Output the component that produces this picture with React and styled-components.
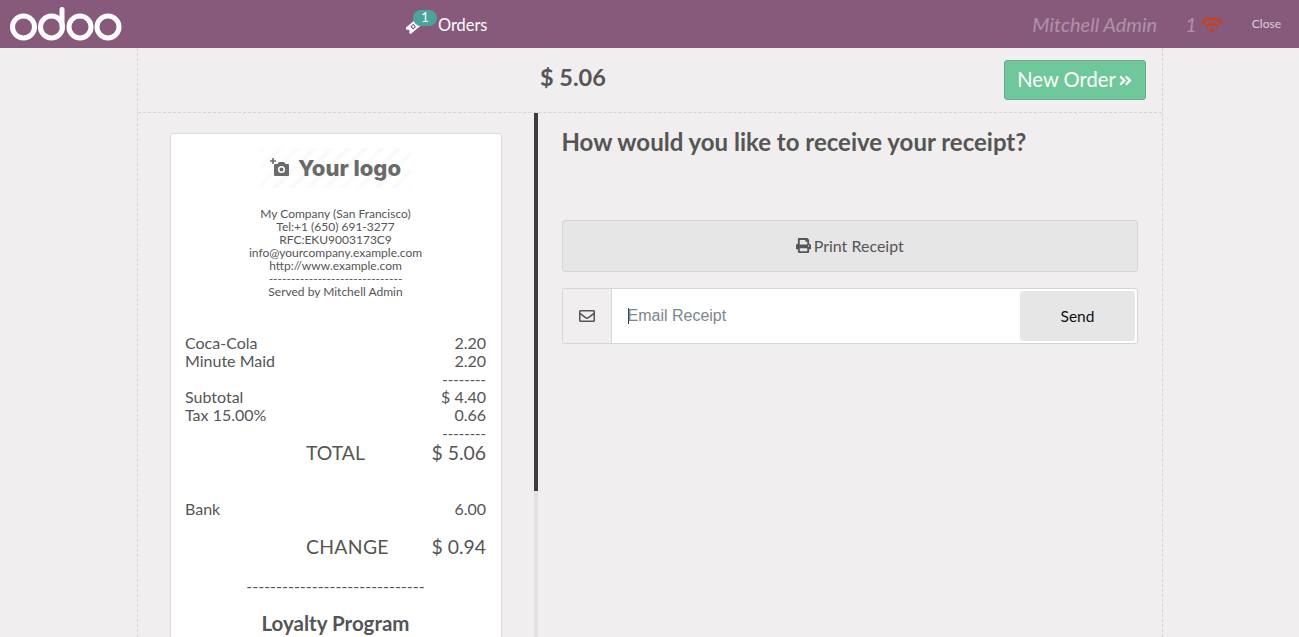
import React from "react";
import styled, { createGlobalStyle } from "styled-components";
import { FaPrint, FaAngleDoubleRight, FaRegEnvelope, FaWifi } from "react-icons/fa";

const Global = createGlobalStyle`
  html, body { margin: 0; height: 100%; overflow: hidden; }
  body { font-family: "Lato", "Liberation Sans", sans-serif; background: #f0eeee; color: #555; }
  * { box-sizing: border-box; }
`;

const Page = styled.div`
  height: 637px;
  display: flex;
  flex-direction: column;
  overflow: hidden;
`;
const TopBar = styled.header`
  flex: none;
  height: 48px;
  background: #875a7b;
  display: flex;
  align-items: center;
  padding-left: 10px;
`;
const LogoSvg = styled.svg`
  width: 112px;
  height: 40px;
  flex: none;
  margin-top: -4px;
`;
const OrdersTab = styled.div`
  position: relative;
  margin-left: 284px;
  width: 92px;
  height: 48px;
  display: flex;
  align-items: center;
  color: #fff;
  font-size: 16.4px;
`;
const Ticket = styled.svg`
  width: 16px;
  height: 16px;
  flex: none;
  margin-right: 16px;
  margin-top: 4px;
`;
const Badge = styled.span`
  position: absolute;
  left: 7px;
  top: 10px;
  width: 24px;
  height: 16px;
  border-radius: 9px;
  background: #4aa39c;
  color: #fff;
  font-size: 13px;
  line-height: 15px;
  text-align: center;
`;
const Status = styled.div`
  margin-left: auto;
  display: flex;
  align-items: center;
  font-style: italic;
  font-size: 20px;
  color: rgba(255, 255, 255, 0.35);
`;
const Cashier = styled.span`
  margin-right: 28px;
`;
const WifiIcon = styled(FaWifi)`
  width: 22px;
  height: 18px;
  margin: 1px 0 0 4px;
  color: #c7401f;
`;
const CloseBtn = styled.span`
  margin: -1px 18px 0 29px;
  font-size: 12px;
  color: rgba(255, 255, 255, 0.72);
`;
const Screen = styled.main`
  flex: 1;
  min-height: 0;
  width: 1026px;
  margin-left: 137px;
  border-left: 1px dashed #d6d4d4;
  border-right: 1px dashed #d6d4d4;
  display: flex;
  flex-direction: column;
`;
const TopRow = styled.div`
  flex: none;
  height: 65px;
  border-bottom: 1px dashed #d6d4d4;
  position: relative;
  display: flex;
  align-items: center;
  justify-content: flex-end;
  padding-right: 16px;
`;
const Due = styled.div`
  position: absolute;
  left: 402px;
  top: 14px;
  font-size: 23.5px;
  line-height: 30px;
  font-weight: 700;
  color: #555;
`;
const NewOrder = styled.button`
  height: 40px;
  width: 142px;
  background: #6ec89b;
  border: 1px solid #64ad88;
  border-radius: 3px;
  color: #fff;
  font: 400 20.2px "Lato", sans-serif;
  padding: 0 0 2px;
  display: flex;
  align-items: center;
  justify-content: center;
  gap: 2px;
`;
const NextIcon = styled(FaAngleDoubleRight)`
  width: 15px;
  height: 15px;
  margin-top: 3px;
`;
const Columns = styled.div`
  flex: 1;
  min-height: 0;
  display: flex;
`;
const LeftPane = styled.section`
  flex: none;
  width: 396px;
  padding: 20px 0 0 32px;
  overflow: hidden;
`;
const Track = styled.div`
  flex: none;
  width: 4px;
  background: #e2e2e2;
`;
const Thumb = styled.div`
  height: 378px;
  background: #3c3c3c;
`;
const Receipt = styled.article`
  width: 332px;
  background: #fff;
  border: 1px solid #dcdcdc;
  border-radius: 3px;
  padding: 14px 15px 0 14px;
  height: 600px;
  color: #555;
`;
const LogoBox = styled.div`
  width: 150px;
  height: 40px;
  margin: 0 auto 0;
  display: flex;
  align-items: center;
  justify-content: center;
  gap: 8px;
  font-family: "Inter", sans-serif;
  font-size: 22px;
  font-weight: 800;
  color: #6a6a6a;
  background: repeating-linear-gradient(135deg, #fafafa 0 4px, #fff 4px 12px);
`;
const CameraIcon = styled.svg`
  width: 20px;
  height: 20px;
  flex: none;
`;
const Contact = styled.div`
  margin-top: 19px;
  text-align: center;
  font-size: 12px;
  line-height: 13px;
`;
const Lines = styled.div`
  margin-top: 36px;
  font-size: 16px;
  line-height: 18px;
`;
const Row = styled.div`
  display: flex;
  justify-content: space-between;
  margin-top: ${p => p.$gap || 0}px;
`;
const Dash = styled.div`
  text-align: right;
  font-size: 14.7px;
`;
const BigRow = styled.div`
  display: flex;
  justify-content: space-between;
  margin-top: ${p => p.$gap || 0}px;
  padding-left: 121px;
  font-size: 19.4px;
  line-height: 22px;
`;
const ChangeLabel = styled.span`
  letter-spacing: 0.3px;
`;
const Rule = styled.div`
  margin-top: 19px;
  text-align: center;
  font-size: 16px;
  line-height: 18px;
`;
const Loyalty = styled.h3`
  margin: 16px 0 0;
  text-align: center;
  font-size: 20.5px;
  line-height: 24px;
  font-weight: 700;
  color: #555;
`;
const RightPane = styled.section`
  flex: 1;
  padding: 14px 24px 0 23.5px;
`;
const Title = styled.h2`
  margin: 0;
  font-size: 24px;
  line-height: 30px;
  font-weight: 700;
  color: #555;
`;
const PrintBtn = styled.button`
  display: flex;
  width: 100%;
  height: 52px;
  margin-top: 63px;
  padding: 0 0 2px;
  background: #e6e6e6;
  border: 1px solid #d6d6d6;
  border-radius: 3px;
  color: #555;
  font: 400 16px "Lato", sans-serif;
  align-items: center;
  justify-content: center;
  gap: 3px;
`;
const EmailGroup = styled.div`
  display: flex;
  height: 56px;
  margin-top: 16px;
  border: 1px solid #d6d6d6;
  border-radius: 3px;
  background: #fff;
  overflow: hidden;
`;
const EmailIcon = styled.div`
  flex: none;
  width: 49px;
  background: #f0eeee;
  border-right: 1px solid #d6d6d6;
  display: flex;
  align-items: center;
  justify-content: center;
  color: #555;
  font-size: 16px;
`;
const EmailText = styled.div`
  flex: 1;
  padding: 0 16px;
  display: flex;
  align-items: center;
  font-family: "Liberation Sans", Arial, sans-serif;
  font-size: 16px;
  color: #7d868c;
`;
const Caret = styled.span`
  width: 1px;
  height: 16px;
  margin-right: -1px;
  background: #333;
`;
const SendBtn = styled.button`
  flex: none;
  width: 115px;
  margin: 2px;
  background: #e6e6e6;
  border: none;
  border-radius: 3px;
  color: #111;
  font: 400 15.5px "Lato", sans-serif;
  padding: 0;
`;

export default function App() {
  return (
    <Page>
      <Global />
      <TopBar>
        <LogoSvg viewBox="0 0 112 40" aria-label="odoo">
          <g fill="none" stroke="#fff" strokeWidth="5">
            <circle cx="13.5" cy="25" r="11" />
            <circle cx="41.5" cy="25" r="11" />
            <circle cx="70" cy="25" r="11" />
            <circle cx="98" cy="25" r="11" />
            <path d="M52 25V7.5" strokeLinecap="round" />
          </g>
        </LogoSvg>
        <OrdersTab>
          <Ticket viewBox="0 0 16 16">
            <g transform="rotate(-40 8 8)">
              <path fill="#fff" d="M0 4h16v2.4a1.6 1.6 0 0 0 0 3.2V12H0V9.6a1.6 1.6 0 0 0 0-3.2Z" />
              <rect x="5" y="6" width="4" height="4" fill="#875a7b" />
              <rect x="6" y="7" width="2" height="2" fill="#fff" />
            </g>
          </Ticket>
          <Badge>1</Badge>
          Orders
        </OrdersTab>
        <Status>
          <Cashier>Mitchell Admin</Cashier>
          1
          <WifiIcon />
        </Status>
        <CloseBtn>Close</CloseBtn>
      </TopBar>
      <Screen>
        <TopRow>
          <Due>$ 5.06</Due>
          <NewOrder>New Order<NextIcon /></NewOrder>
        </TopRow>
        <Columns>
          <LeftPane>
            <Receipt>
              <LogoBox>
                <CameraIcon viewBox="0 0 20 20">
                  <path fill="#6a6a6a" d="M5 6h2.5L9 4h5l1.5 2H18a1 1 0 0 1 1 1v10a1 1 0 0 1-1 1H5a1 1 0 0 1-1-1V7a1 1 0 0 1 1-1Z" />
                  <circle cx="11.5" cy="11.5" r="3.6" fill="#fff" />
                  <circle cx="11.5" cy="11.5" r="2" fill="#6a6a6a" />
                  <path d="M3 0v6M0 3h6" stroke="#6a6a6a" strokeWidth="1.6" />
                </CameraIcon>
                Your logo
              </LogoBox>
              <Contact>
                <div>My Company (San Francisco)</div>
                <div>Tel:+1 (650) 691-3277</div>
                <div>RFC:EKU9003173C9</div>
                <div>info@yourcompany.example.com</div>
                <div>http://www.example.com</div>
                <div>------------------------------</div>
                <div>Served by Mitchell Admin</div>
              </Contact>
              <Lines>
                <Row><span>Coca-Cola</span><span>2.20</span></Row>
                <Row><span>Minute Maid</span><span>2.20</span></Row>
                <Dash>--------</Dash>
                <Row><span>Subtotal</span><span>$ 4.40</span></Row>
                <Row><span>Tax 15.00%</span><span>0.66</span></Row>
                <Dash>--------</Dash>
                <BigRow><span>TOTAL</span><span>$ 5.06</span></BigRow>
                <Row $gap={36}><span>Bank</span><span>6.00</span></Row>
                <BigRow $gap={18}><ChangeLabel>CHANGE</ChangeLabel><span>$ 0.94</span></BigRow>
              </Lines>
              <Rule>------------------------------</Rule>
              <Loyalty>Loyalty Program</Loyalty>
            </Receipt>
          </LeftPane>
          <Track><Thumb /></Track>
          <RightPane>
            <Title>How would you like to receive your receipt?</Title>
            <PrintBtn><FaPrint size={15} />Print Receipt</PrintBtn>
            <EmailGroup>
              <EmailIcon><FaRegEnvelope /></EmailIcon>
              <EmailText><Caret />Email Receipt</EmailText>
              <SendBtn>Send</SendBtn>
            </EmailGroup>
          </RightPane>
        </Columns>
      </Screen>
    </Page>
  );
}
